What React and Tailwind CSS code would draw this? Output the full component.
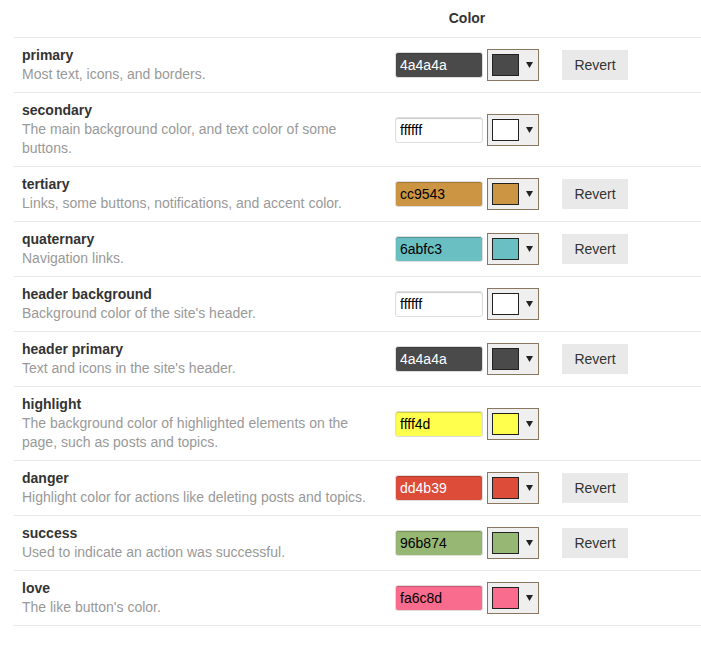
import { useState } from 'react';

// colour scheme rows
const COLORS = [
  { name: 'primary', desc: 'Most text, icons, and borders.', hex: '4a4a4a', light: true, revert: true },
  { name: 'secondary', desc: 'The main background color, and text color of some buttons.', hex: 'ffffff' },
  { name: 'tertiary', desc: 'Links, some buttons, notifications, and accent color.', hex: 'cc9543', revert: true },
  { name: 'quaternary', desc: 'Navigation links.', hex: '6abfc3', revert: true },
  { name: 'header background', desc: "Background color of the site's header.", hex: 'ffffff' },
  { name: 'header primary', desc: "Text and icons in the site's header.", hex: '4a4a4a', light: true, revert: true },
  { name: 'highlight', desc: 'The background color of highlighted elements on the page, such as posts and topics.', hex: 'ffff4d' },
  { name: 'danger', desc: 'Highlight color for actions like deleting posts and topics.', hex: 'dd4b39', light: true, revert: true },
  { name: 'success', desc: 'Used to indicate an action was successful.', hex: '96b874', revert: true },
  { name: 'love', desc: "The like button's color.", hex: 'fa6c8d' },
];

const ColorRow = ({ color, onChange }) => {
  return (
    <div className="flex items-center border-t border-[#e9e9e9]">
      <div className="w-[373px] shrink-0 px-2 py-2 leading-[19px]">
        <div className="font-bold text-[#333]">{color.name}</div>
        <div className="text-[#999]">{color.desc}</div>
      </div>
      <div className="w-[160px] shrink-0 flex items-center gap-1 pl-2">
        <input
          value={color.hex}
          onChange={e => onChange(e.target.value)}
          style={{ backgroundColor: `#${color.hex}` }}
          className={`w-[88px] h-[26px] rounded-[3px] border border-[#ddd] shadow-[inset_0_1px_1px_rgba(0,0,0,0.2)] px-1 text-[14px] outline-none ${color.light ? 'text-white' : 'text-black'}`}
        />
        <div className="w-[52px] h-[32px] border border-[#8b7660] bg-[#efefef] flex items-center pl-1">
          <div className="w-[27px] h-[22px] border border-[#222]" style={{ backgroundColor: `#${color.hex}` }} />
          <svg width="7" height="6" viewBox="0 0 7 6" className="ml-[7px]">
            <path d="M0 0h7L3.5 6z" fill="#222" />
          </svg>
        </div>
      </div>
      <div className="pl-[15px]">
        {color.revert && (
          <button className="w-[66px] h-[30px] bg-[#e9e9e9] text-[#333] text-[14px]">Revert</button>
        )}
      </div>
    </div>
  );
};

const App = () => {
  const [colors, setColors] = useState(COLORS);

  const updateColor = (idx, hex) => {
    setColors(colors.map((c, i) => (i === idx ? { ...c, hex } : c)));
  };

  return (
    <div className="min-h-screen bg-white pl-[14px] text-[14px] font-['Liberation_Sans',Arial,sans-serif]">
      {/* Header */}
      <div className="flex h-[37px] items-center">
        <div className="w-[373px] shrink-0" />
        <div className="w-[160px] shrink-0 text-center font-bold text-[#333]">Color</div>
      </div>

      {colors.map((c, i) => (
        <ColorRow key={c.name} color={c} onChange={hex => updateColor(i, hex)} />
      ))}
      <div className="border-t border-[#e9e9e9]" />
    </div>
  );
};

export default App;
